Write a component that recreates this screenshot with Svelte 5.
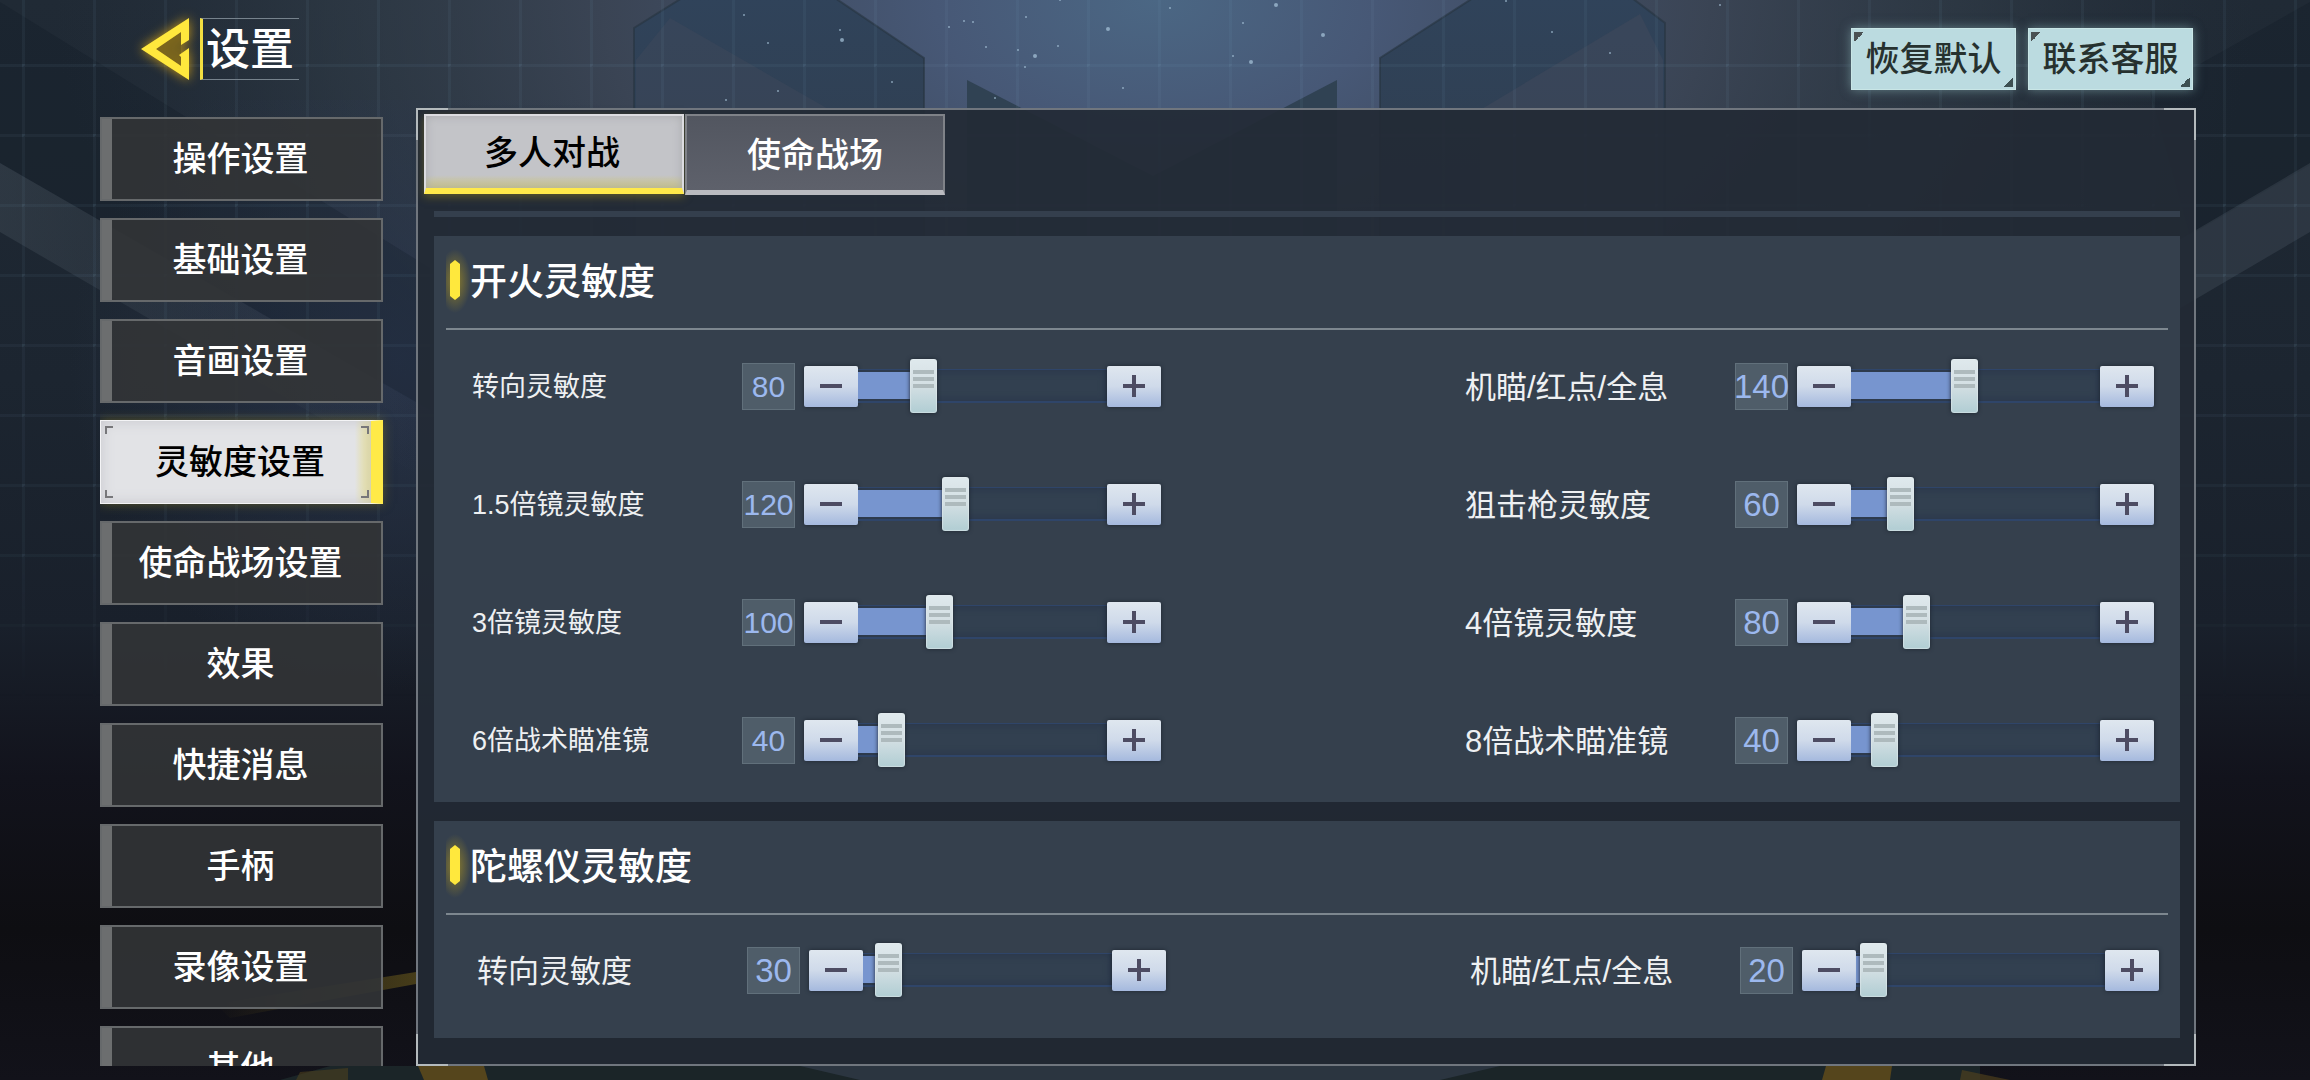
<script>
  const navItems = [
    '操作设置', '基础设置', '音画设置', '灵敏度设置', '使命战场设置',
    '效果', '快捷消息', '手柄', '录像设置', '其他'
  ];
  const tabs = ['多人对战', '使命战场'];
  const MAX = 300;

  let activeNav = $state('灵敏度设置');
  let activeTab = $state('多人对战');

  let sections = $state([
    {
      id: 'fire',
      title: '开火灵敏度',
      rows: [
        { label: '转向灵敏度', value: 80, compact: true },
        { label: '机瞄/红点/全息', value: 140 },
        { label: '1.5倍镜灵敏度', value: 120, compact: true },
        { label: '狙击枪灵敏度', value: 60 },
        { label: '3倍镜灵敏度', value: 100, compact: true },
        { label: '4倍镜灵敏度', value: 80 },
        { label: '6倍战术瞄准镜', value: 40, compact: true },
        { label: '8倍战术瞄准镜', value: 40 }
      ]
    },
    {
      id: 'gyro',
      title: '陀螺仪灵敏度',
      rows: [
        { label: '转向灵敏度', value: 30 },
        { label: '机瞄/红点/全息', value: 20 }
      ]
    }
  ]);

  const stars = [
    [1108, 29, 2], [1035, 56, 2], [1026, 17, 1], [1025, 67, 1], [1058, 46, 1], [1251, 62, 2],
    [1323, 35, 2], [1276, 5, 2], [1243, 23, 1], [1233, 56, 1], [842, 40, 2], [840, 30, 1],
    [768, 43, 1], [744, 15, 1], [778, 91, 1], [892, 82, 1], [964, 21, 1], [949, 27, 1],
    [1170, 8, 1], [1123, 88, 1], [986, 47, 1], [1018, 50, 1], [1610, 53, 1], [1552, 32, 1],
    [1720, 5, 1], [726, 100, 1], [995, 98, 1], [1506, 1, 1], [1060, 0, 1], [973, 22, 1]
  ];

  function step(row, delta) {
    row.value = Math.min(MAX, Math.max(0, row.value + delta));
  }
</script>

<div class="page">
  <svg class="backdrop" viewBox="0 0 2310 1080" preserveAspectRatio="xMidYMin slice" aria-hidden="true">
    <defs>
      <linearGradient id="base" x1="0" y1="0" x2="0" y2="1">
        <stop offset="0" stop-color="#202a35" />
        <stop offset="0.35" stop-color="#1c2530" />
        <stop offset="0.58" stop-color="#19202b" />
        <stop offset="0.72" stop-color="#12131c" />
        <stop offset="0.86" stop-color="#0e0e12" />
        <stop offset="1" stop-color="#12121a" />
      </linearGradient>
      <radialGradient id="glow" gradientUnits="userSpaceOnUse" cx="1155" cy="0" r="1100" gradientTransform="scale(1 .6)">
        <stop offset="0" stop-color="#4b6784" />
        <stop offset="0.2" stop-color="#475876" />
        <stop offset="0.5" stop-color="#3f495a" stop-opacity=".85" />
        <stop offset="0.75" stop-color="#36424e" stop-opacity=".5" />
        <stop offset="1" stop-color="#2a3442" stop-opacity="0" />
      </radialGradient>
      <linearGradient id="pillar" x1="0" y1="0" x2="0" y2="1">
        <stop offset="0" stop-color="#30435a" />
        <stop offset="1" stop-color="#2f3c4c" />
      </linearGradient>
      <radialGradient id="haze" gradientUnits="userSpaceOnUse" cx="400" cy="360" r="330">
        <stop offset="0" stop-color="#2d3952" stop-opacity=".7" />
        <stop offset="1" stop-color="#2d3952" stop-opacity="0" />
      </radialGradient>
      <linearGradient id="stripe" x1="0" y1="0" x2="1" y2="0">
        <stop offset="0" stop-color="#5a6670" stop-opacity=".26" />
        <stop offset="1" stop-color="#5a6670" stop-opacity="0" />
      </linearGradient>
      <linearGradient id="ray" x1="0" y1="0" x2="1" y2="0">
        <stop offset="0" stop-color="#6a5a1c" stop-opacity="0" />
        <stop offset="1" stop-color="#6a5a1c" stop-opacity=".6" />
      </linearGradient>
      <pattern id="mesh" x="22" y="64" width="71" height="70" patternUnits="userSpaceOnUse">
        <path d="M0 0H71M0 0V70" fill="none" stroke="#7fa6c8" stroke-opacity=".07" stroke-width="6" />
        <circle cx="0" cy="0" r="3" fill="#8fb8d8" fill-opacity=".12" />
      </pattern>
      <linearGradient id="meshFade" x1="0" y1="0" x2="0" y2="1">
        <stop offset="0" stop-color="#fff" />
        <stop offset="0.5" stop-color="#fff" stop-opacity=".8" />
        <stop offset="0.65" stop-color="#fff" stop-opacity="0" />
      </linearGradient>
      <mask id="meshMask"><rect width="2310" height="1080" fill="url(#meshFade)" /></mask>
    </defs>
    <rect width="2310" height="1080" fill="url(#base)" />
    <rect width="2310" height="1080" fill="url(#glow)" />
    <rect y="100" width="760" height="600" fill="url(#haze)" />
    <path d="M0 2L430 268V410L0 163Z" fill="#0c1420" fill-opacity=".2" />
    <path d="M0 163L420 405V476L0 232Z" fill="url(#stripe)" />
    <path d="M2310 2L2150 92L2190 235L2310 165Z" fill="#0c1420" fill-opacity=".2" />
    <path d="M2310 163L1990 351V420L2310 232Z" fill="#5a6670" fill-opacity=".26" />
    <g stroke="#26333f" stroke-opacity=".6" stroke-width="2">
      <path d="M634 300V28L682 -2H835L924 58V300Z" fill="url(#pillar)" />
      <path d="M1665 300V23L1632 -2H1473L1380 58V300Z" fill="url(#pillar)" />
    </g>
    <path d="M636 60L670 18L830 110V300H636Z" fill="#414a5c" fill-opacity=".45" />
    <path d="M1663 60L1640 14L1480 110V300H1663Z" fill="#414a5c" fill-opacity=".5" />
    <path d="M967 80L1153 176L1337 80V300H967Z" fill="#304253" />
    <rect width="2310" height="1080" fill="url(#mesh)" mask="url(#meshMask)" />
    {#each stars as [x, y, r]}
      <circle cx={x} cy={y} {r} fill="#a9c6dc" fill-opacity=".7" />
    {/each}
    <path d="M215 1004L416 972V984L230 1018Z" fill="url(#ray)" />
    <path d="M330 1066H1980V1080H280Z" fill="#1b2528" />
    <path d="M800 1066H1500L1440 1080H860Z" fill="#2b3540" />
    <g fill="#55451c">
      <path d="M418 1066H484L488 1080H424Z" />
      <path d="M1826 1066H1892L1890 1080H1822Z" />
      <path d="M300 1072L348 1068V1080H296Z" fill-opacity=".5" />
      <path d="M1962 1070L2010 1080H1960Z" fill-opacity=".6" />
    </g>
  </svg>

  <header class="topbar">
    <div class="brand">
      <button class="back" aria-label="返回">
        <svg viewBox="0 0 48 62" width="48" height="62" aria-hidden="true">
          <path d="M40 14L15 31L40 48Z" fill="#6a5a1c" fill-opacity=".7" />
          <path d="M48 0V22L40 27V14L15 31L40 48V39L38 37L48 30V62L0 31Z" fill="#ffe83d" />
        </svg>
      </button>
      <h1>设置</h1>
    </div>
    <div class="actions">
      <button>恢复默认</button>
      <button>联系客服</button>
    </div>
  </header>

  <div class="body">
    <nav class="side" aria-label="设置">
      {#each navItems as item}
        <button class="nav" class:active={item === activeNav} onclick={() => (activeNav = item)}>
          {#if item === activeNav}<span class="frame"></span>{/if}
          {item}
        </button>
      {/each}
    </nav>

    <main class="panel">
      <div class="tabs" role="tablist">
        {#each tabs as tab}
          <button class="tab" class:active={tab === activeTab} role="tab" aria-selected={tab === activeTab} onclick={() => (activeTab = tab)}>{tab}</button>
        {/each}
      </div>
      <div class="content">
        <div class="edge"></div>
        {#each sections as section}
          <section class={section.id}>
            <h2>{section.title}</h2>
            <div class="grid">
              {#each section.rows as row, i}
                <div class="row" class:compact={row.compact}>
                  <label for="{section.id}-{i}">{row.label}</label>
                  <output for="{section.id}-{i}">{row.value}</output>
                  <div class="slider">
                    <button class="step" aria-label="{row.label} 减少" onclick={() => step(row, -1)}>
                      <svg viewBox="0 0 22 22" width="22" height="22" aria-hidden="true"><path d="M0 11H22" stroke="#4d4c63" stroke-width="4" /></svg>
                    </button>
                    <div class="track">
                      <div class="rail"><div class="fill" style="width:{(row.value / MAX) * 100}%"></div></div>
                      <input id="{section.id}-{i}" type="range" min="0" max={MAX} bind:value={row.value} />
                    </div>
                    <button class="step" aria-label="{row.label} 增加" onclick={() => step(row, 1)}>
                      <svg viewBox="0 0 22 22" width="22" height="22" aria-hidden="true"><path d="M0 11H22M11 0V22" stroke="#4d4c63" stroke-width="4" /></svg>
                    </button>
                  </div>
                </div>
              {/each}
            </div>
          </section>
        {/each}
      </div>
    </main>
  </div>
</div>

<style>
  :global(body) { margin: 0; background: #12131c; }
  * { box-sizing: border-box; }
  button { font: inherit; margin: 0; padding: 0; border: 0; cursor: pointer; }
  h1, h2 { margin: 0; font-weight: 500; }

  .page {
    position: relative;
    isolation: isolate;
    display: flex;
    flex-direction: column;
    height: 100vh;
    overflow: hidden;
    color: #fff;
    font-family: "Liberation Sans", "Noto Sans CJK SC", sans-serif;
  }
  .backdrop { position: absolute; inset: 0; z-index: -1; width: 100%; height: 100%; }

  .topbar {
    display: flex;
    justify-content: space-between;
    align-items: flex-start;
    height: 108px;
    flex: none;
    padding: 18px 117px 0 141px;
  }
  .brand { display: flex; gap: 11px; }
  .back { width: 48px; height: 62px; background: none; }
  .back svg { display: block; overflow: visible; filter: drop-shadow(0 0 6px #c99a18); }
  h1 {
    width: 99px;
    height: 62px;
    padding-left: 3px;
    border: 1px solid #76828c;
    border-left: 3px solid #f3df42;
    border-right: 0;
    font-size: 44px;
    line-height: 62px;
    white-space: nowrap;
  }
  .actions { display: flex; gap: 12px; padding-top: 10px; }
  .actions button {
    width: 165px;
    height: 62px;
    color: #26312f;
    font-size: 34px;
    font-weight: 500;
    line-height: 60px;
    white-space: nowrap;
    background:
      linear-gradient(135deg, #4b5254 50%, transparent 50%) 2px 3px / 10px 10px no-repeat,
      linear-gradient(315deg, #3d5052 50%, transparent 50%) 151px 48px / 10px 10px no-repeat,
      #bbdbe0;
    border: 1px solid #c9e6e6;
    box-shadow: 0 0 10px #7fa3a8aa;
  }

  .body { display: flex; flex: 1; min-height: 0; gap: 33px; padding: 0 114px 14px 100px; }
  .side {
    display: flex;
    flex: none;
    flex-direction: column;
    gap: 17px;
    box-sizing: content-box;
    width: 283px;
    margin-right: -20px;
    padding: 9px 20px 0 0;
    overflow: hidden;
  }
  .nav {
    position: relative;
    flex: none;
    height: 84px;
    padding: 0 2px 6px 0;
    color: #fff;
    font-size: 34px;
    font-weight: 500;
    background: linear-gradient(90deg, #6c6e6f 10px, transparent 10px) #323436e6;
    border: 2px solid #66696b;
  }
  .nav.active {
    padding: 0 0 6px 8px;
    color: #000;
    background: linear-gradient(90deg, transparent 94%, #e9e08a) #e2e3e6;
    border: 1px solid #f4f4f6;
    border-right: 12px solid #ffea48;
    box-shadow: 0 0 10px #8a7d2288, inset 0 0 14px #c8c8ce;
  }
  .frame {
    position: absolute;
    inset: 5px 2px 5px 4px;
    background:
      linear-gradient(#77777a, #77777a) 0 0 / 8px 2px,
      linear-gradient(#77777a, #77777a) 0 0 / 2px 8px,
      linear-gradient(#77777a, #77777a) 100% 0 / 8px 2px,
      linear-gradient(#77777a, #77777a) 100% 0 / 2px 8px,
      linear-gradient(#77777a, #77777a) 0 100% / 8px 2px,
      linear-gradient(#77777a, #77777a) 0 100% / 2px 8px,
      linear-gradient(#77777a, #77777a) 100% 100% / 8px 2px,
      linear-gradient(#77777a, #77777a) 100% 100% / 2px 8px;
    background-repeat: no-repeat;
  }

  .panel {
    position: relative;
    flex: 1;
    min-width: 0;
    padding: 4px 6px 0;
    background: #232a35ec;
    border: 2px solid #70767e;
  }
  .panel::before {
    content: "";
    position: absolute;
    inset: -2px;
    pointer-events: none;
    --c: linear-gradient(#b4babd, #b4babd);
    background:
      var(--c) 0 0 / 32px 2px, var(--c) 0 0 / 2px 32px,
      var(--c) 100% 0 / 32px 2px, var(--c) 100% 0 / 2px 32px,
      var(--c) 0 100% / 32px 2px, var(--c) 0 100% / 2px 32px,
      var(--c) 100% 100% / 32px 2px, var(--c) 100% 100% / 2px 32px;
    background-repeat: no-repeat;
  }
  .tabs { display: flex; gap: 1px; height: 81px; }
  .tab {
    width: 260px;
    padding-bottom: 2px;
    font-size: 34px;
    font-weight: 500;
    color: #fff;
    background: linear-gradient(#525660, #5e616b);
    border: 2px solid #7f8288;
    border-bottom: 5px solid #babbc0;
  }
  .tab.active {
    height: 80px;
    padding: 0 4px 3px 0;
    color: #000;
    background: linear-gradient(transparent 82%, #cdc680) #c3c4c8;
    border: 2px solid #dcdce0;
    border-bottom: 6px solid #ffe94a;
    box-shadow: 0 3px 8px #8a7d2288, inset 0 0 10px #a9aaae;
  }
  .content { padding: 16px 8px 0 10px; }
  .edge { height: 6px; background: #343f4d; margin-bottom: 19px; }
  section { padding: 0 12px; background: #35404d; margin-bottom: 19px; }
  .fire { height: 566px; }
  .gyro { height: 217px; }
  h2 {
    display: flex;
    align-items: center;
    gap: 10px;
    height: 94px;
    padding: 0 0 6px 4px;
    font-size: 37px;
    background: radial-gradient(16px 32px at 9px 45px, #b59a1cb0, transparent);
    border-bottom: 2px solid #7d878f;
  }
  h2::before {
    content: "";
    width: 10px;
    height: 40px;
    margin-top: 2px;
    background: #ffe83d;
    clip-path: polygon(50% 0, 100% 10%, 100% 90%, 50% 100%, 0 90%, 0 10%);
  }

  .grid {
    display: grid;
    grid-template-columns: repeat(2, minmax(0, 689px));
    justify-content: space-between;
    row-gap: 70px;
    padding: 32px 14px 0 26px;
  }
  .gyro .grid { padding: 31px 9px 0 31px; }
  .row { display: flex; align-items: center; height: 48px; }
  label { flex: 1; padding-bottom: 4px; font-size: 31px; white-space: nowrap; color: #eef0f2; }
  .compact label { font-size: 27px; }
  output {
    display: flex;
    align-items: center;
    justify-content: center;
    width: 53px;
    height: 47px;
    margin-right: 9px;
    padding-top: 2px;
    color: #9cb8ee;
    font-size: 33px;
    background: #4f5d69;
    border: 1px solid #61707b;
  }
  .compact output { font-size: 30px; }
  .slider { display: flex; align-items: center; width: 357px; }
  .step {
    display: flex;
    align-items: center;
    justify-content: center;
    flex: none;
    width: 54px;
    height: 41px;
    border-radius: 2px;
    background: linear-gradient(#dfe7ef, #cfdaea 50%, #a5b9de);
    box-shadow: 0 0 4px #1d2530;
  }
  .track { display: grid; flex: 1; min-width: 0; align-items: center; }
  .rail, .track input { grid-area: 1 / 1; }
  .rail {
    height: 34px;
    padding: 2px 9px 2px 0;
    background: #324050;
    border: solid #2f4569;
    border-width: 1px 0 2px;
    box-shadow: inset 0 0 8px #27344a;
  }
  .fill { height: 100%; background: #7795cf; }
  .track input {
    position: relative;
    appearance: none;
    width: auto;
    height: 54px;
    margin: 0 -6px 0 -12px;
    background: none;
  }
  .track input::-webkit-slider-thumb {
    appearance: none;
    width: 27px;
    height: 54px;
    border-radius: 3px;
    background:
      linear-gradient(#aebabd, #aebabd) 50% 11px / 21px 4px no-repeat,
      linear-gradient(#aebabd, #aebabd) 50% 18px / 21px 4px no-repeat,
      linear-gradient(#aebabd, #aebabd) 50% 25px / 21px 4px no-repeat,
      linear-gradient(#dfe9ed, #d3dfe3 50%, #b0cdd3);
    box-shadow: 0 0 4px #1d2530, inset 0 0 1px 1px #e3ecee88;
  }
</style>
